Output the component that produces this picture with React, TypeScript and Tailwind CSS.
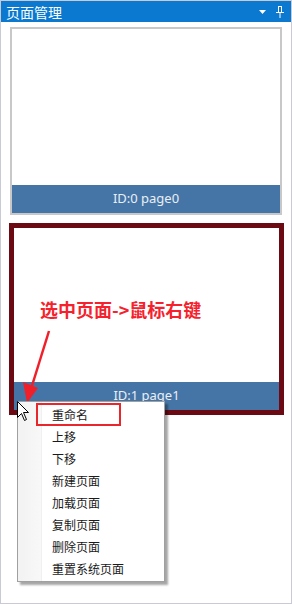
import React from "react";

const cjk = { fontFamily: '"Noto Sans CJK SC", "Noto Sans", sans-serif' };
const latin = { fontFamily: '"Noto Sans", "Noto Sans CJK SC", sans-serif' };

const menuItems = ["重命名", "上移", "下移", "新建页面", "加载页面", "复制页面", "删除页面", "重置系统页面"];

export default function App() {
  return (
    <div className="relative w-[292px] h-[604px] bg-white border border-[#cacad6] overflow-hidden" style={cjk}>
      {/* Header */}
      <div className="h-[21px] bg-[#0a79cf] flex items-center justify-between pl-[5px] pr-[7px]">
        <span className="text-white text-[14px] leading-none">页面管理</span>
        <div className="flex items-center gap-[10px]">
          <svg width="7" height="4" viewBox="0 0 7 4">
            <path d="M0 0 H7 L3.5 4 Z" fill="#ffffff" />
          </svg>
          <svg width="8" height="12" viewBox="0 0 8 12">
            <path d="M2 0.5 H6 M2.5 0.5 V6 M5.5 0.5 V6 M0 6.5 H8 M4 6.5 V12" stroke="#ffffff" strokeWidth="1" fill="none" />
          </svg>
        </div>
      </div>

      {/* Pages */}
      <div className="flex flex-col pt-[5px]">
        <div className="ml-[9px] w-[272px] border-2 border-[#c8c8c8] flex flex-col">
          <div className="h-[156px] bg-white" />
          <div className="h-[28px] bg-[#4575a6] flex items-center justify-center text-[13px] text-[#e9eff6]" style={latin}>
            ID:0 page0
          </div>
        </div>
        <div className="mt-[8px] ml-[8px] w-[275px] border-[5px] border-[#6c0a13] flex flex-col">
          <div className="h-[154px] bg-white" />
          <div className="h-[28px] bg-[#4575a6] flex items-center justify-center text-[13px] text-[#e9eff6]" style={latin}>
            ID:1 page1
          </div>
        </div>
      </div>

      {/* Annotation text */}
      <div className="absolute left-[39px] top-[299px] text-[18px] leading-[18px] font-bold text-[#f5222d] whitespace-nowrap">
        选中页面-&gt;鼠标右键
      </div>

      {/* Annotation arrow */}
      <svg className="absolute left-0 top-0" width="292" height="604" viewBox="0 0 292 604" style={{ pointerEvents: "none" }}>
        <line x1="48" y1="330" x2="30" y2="388" stroke="#f0202a" strokeWidth="2.5" />
        <polygon points="22,381 37,387 26,402" fill="#f0202a" />
      </svg>

      {/* Context menu */}
      <div className="absolute left-[16px] top-[400px] w-[148px] h-[181px] bg-white border border-[#a0a0a0] shadow-[3px_3px_2px_rgba(0,0,0,0.35)] flex">
        <div className="w-[24px] h-full bg-gradient-to-r from-[#f2f2f2] to-[#f8f8f8] border-r border-[#f0f0f0]" />
        <div className="flex-1 flex flex-col pt-[2px]">
          {menuItems.map((t) => (
            <div key={t} className="h-[22px] flex items-center pl-[10px] text-[12px] text-[#1a1a1a] leading-none">
              {t}
            </div>
          ))}
        </div>
        <div className="absolute left-[18px] top-[1px] w-[85px] h-[23px] border-2 border-[#e8262b]" />
      </div>

      {/* Mouse cursor */}
      <svg className="absolute left-[16px] top-[400px]" width="13" height="21" viewBox="0 0 13 21">
        <path d="M0.5 0.5 L0.5 16.5 L4.5 12.5 L7.5 19.5 L9.5 18.5 L6.5 11.5 L11.5 11.5 Z" fill="#ffffff" stroke="#000000" strokeWidth="1" />
      </svg>
    </div>
  );
}
